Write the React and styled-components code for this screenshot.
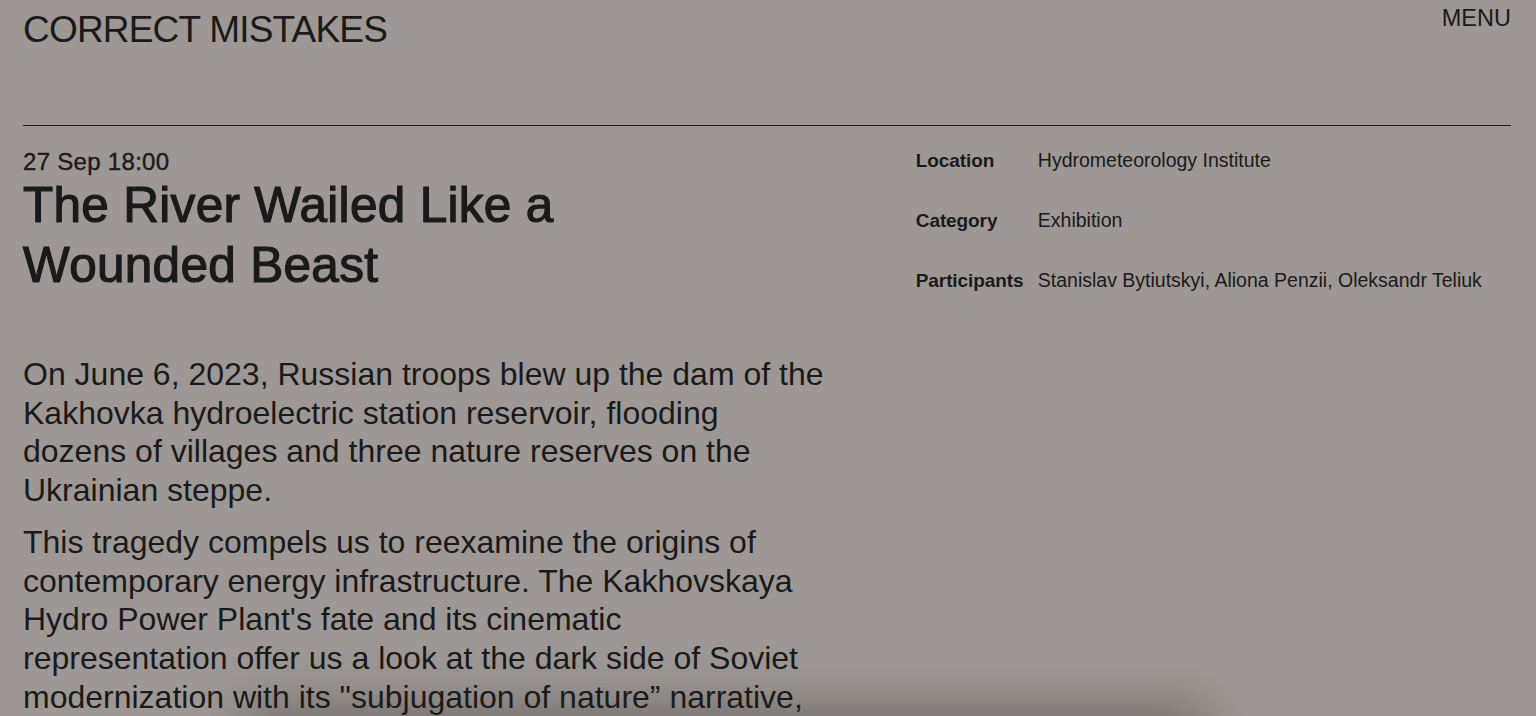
import React from "react";
import styled, { createGlobalStyle } from "styled-components";

const GlobalStyle = createGlobalStyle`
  html, body {
    margin: 0;
    padding: 0;
    background: #9d9895;
    color: #1a1a1a;
    font-family: "Liberation Sans", Arial, sans-serif;
    overflow: hidden;
  }
`;

const Page = styled.div`
  position: relative;
  height: 100vh;
  overflow: hidden;
`;

const Header = styled.header`
  box-sizing: border-box;
  display: flex;
  justify-content: space-between;
  align-items: flex-start;
  height: 126px;
  margin: 0 25px 0 23px;
  border-bottom: 1px solid #1a1a1a;
`;

const Logo = styled.div`
  margin-top: 9px;
  font-size: 37px;
  line-height: 1.15;
  letter-spacing: -0.8px;
  text-transform: uppercase;
`;

const Menu = styled.button`
  margin-top: 5px;
  padding: 0;
  border: 0;
  background: none;
  color: inherit;
  font-family: inherit;
  font-size: 23.5px;
  line-height: 1.15;
  cursor: pointer;
`;

const Main = styled.main`
  display: grid;
  grid-template-columns: 3fr 2fr;
  margin: 0 25px 0 23px;
  padding-top: 23px;
`;

const Article = styled.article`
  max-width: 806px;
`;

const DateLine = styled.div`
  font-size: 24px;
  line-height: 26px;
  letter-spacing: 0.3px;
  -webkit-text-stroke: 0.4px #1a1a1a;
`;

const Title = styled.h1`
  margin: 0 0 60px;
  font-size: 49.5px;
  font-weight: 400;
  line-height: 60px;
  letter-spacing: 0.3px;
  -webkit-text-stroke: 1.2px #1a1a1a;
`;

const Paragraph = styled.p`
  margin: 0 0 13px;
  font-size: 32px;
  line-height: 38.7px;
`;

const Meta = styled.dl`
  display: grid;
  grid-template-columns: 122px 1fr;
  row-gap: 37px;
  align-content: start;
  margin: 0;
  font-size: 19px;
  line-height: 23px;
`;

const Label = styled.dt`
  font-weight: 700;
  letter-spacing: -0.1px;
`;

const Value = styled.dd`
  margin: 0;
  font-size: 19.5px;
`;

const Shade = styled.div`
  position: fixed;
  left: 250px;
  width: 950px;
  top: 100vh;
  height: 200px;
  box-shadow: 0 0 50px 6px rgba(40, 36, 34, 0.42);
  pointer-events: none;
`;

const meta = [
  ["Location", "Hydrometeorology Institute"],
  ["Category", "Exhibition"],
  ["Participants", "Stanislav Bytiutskyi, Aliona Penzii, Oleksandr Teliuk"],
];

const App = () => {
  return (
    <Page>
      <GlobalStyle />
      <Header>
        <Logo>Correct Mistakes</Logo>
        <Menu>MENU</Menu>
      </Header>
      <Main>
        <Article>
          <DateLine>27 Sep 18:00</DateLine>
          <Title>
            The River Wailed Like a
            <br />
            Wounded Beast
          </Title>
          <Paragraph>
            On June 6, 2023, Russian troops blew up the dam of the Kakhovka
            hydroelectric station reservoir, flooding dozens of villages and
            three nature reserves on the Ukrainian steppe.
          </Paragraph>
          <Paragraph>
            This tragedy compels us to reexamine the origins of contemporary
            energy infrastructure. The Kakhovskaya Hydro Power Plant's fate and
            its cinematic representation offer us a look at the dark side of
            Soviet modernization with its "subjugation of nature” narrative,
          </Paragraph>
        </Article>
        <Meta>
          {meta.map(([label, value]) => (
            <React.Fragment key={label}>
              <Label>{label}</Label>
              <Value>{value}</Value>
            </React.Fragment>
          ))}
        </Meta>
      </Main>
      <Shade />
    </Page>
  );
};

export default App;
